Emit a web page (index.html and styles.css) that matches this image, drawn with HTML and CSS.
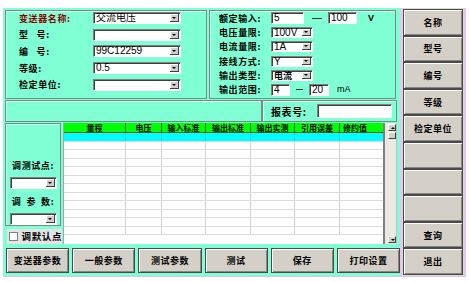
FILE: index.html
```html
<!DOCTYPE html>
<html lang="zh-CN">
<head>
    <meta charset="UTF-8">
    <title>变送器检定</title>
    <link rel="stylesheet" href="styles.css">
</head>
<body>
<div class="screen">
    <div class="main">
        <div class="top">
            <div class="group meter">
                <div class="row"><span class="lbl red">变送器名称:</span><div class="combo w88"><span class="val">交流电压</span><i class="drop"></i></div></div>
                <div class="row"><span class="lbl">型&nbsp;&nbsp;&nbsp;号:</span><div class="combo w88"><span class="val"></span><i class="drop"></i></div></div>
                <div class="row"><span class="lbl">编&nbsp;&nbsp;&nbsp;号:</span><div class="combo w88"><span class="val">99C12259</span><i class="drop"></i></div></div>
                <div class="row"><span class="lbl">等级:</span><div class="combo w88"><span class="val">0.5</span><i class="drop"></i></div></div>
                <div class="row"><span class="lbl">检定单位:</span><div class="combo w88"><span class="val"></span><i class="drop"></i></div></div>
            </div>
            <div class="group rated">
                <div class="row"><span class="lbl">额定输入:</span><span class="input w33">5</span><span class="dash"></span><span class="input w29">100</span><span class="unit">V</span></div>
                <div class="row"><span class="lbl">电压量限:</span><div class="combo w42"><span class="val">100V</span><i class="drop"></i></div></div>
                <div class="row"><span class="lbl">电流量限:</span><div class="combo w42"><span class="val">1A</span><i class="drop"></i></div></div>
                <div class="row"><span class="lbl">接线方式:</span><div class="combo w42"><span class="val">Y</span><i class="drop"></i></div></div>
                <div class="row"><span class="lbl">输出类型:</span><div class="combo w42"><span class="val cjk">电流</span><i class="drop"></i></div></div>
                <div class="row"><span class="lbl">输出范围:</span><span class="input w19">4</span><span class="dash short"></span><span class="input w20">20</span><span class="unit ma">mA</span></div>
            </div>
        </div>

        <div class="mid">
            <div class="group blank"></div>
            <div class="group report"><span class="lbl">报表号:</span><span class="input report-input"></span></div>
        </div>

        <div class="lower">
            <div class="side">
                <div class="group adjust">
                    <span class="lbl">调测试点:</span>
                    <div class="combo w47"><span class="val"></span><i class="drop"></i></div>
                    <span class="lbl spread">调<b>参</b>数:</span>
                    <div class="combo w47"><span class="val"></span><i class="drop"></i></div>
                </div>
                <div class="check"><span class="box"></span><span class="lbl">调默认点</span></div>
            </div>
            <div class="grid">
                <div class="grid-cells">
                    <table>
                        <tr class="head"><td>量程</td><td>电压</td><td>输入标准</td><td>输出标准</td><td>输出实测</td><td>引用误差</td><td class="last">修约值</td></tr>
                        <tr class="current"><td></td><td></td><td></td><td></td><td></td><td></td><td></td></tr>
                        <tr><td></td><td></td><td></td><td></td><td></td><td></td><td></td></tr>
                        <tr><td></td><td></td><td></td><td></td><td></td><td></td><td></td></tr>
                        <tr><td></td><td></td><td></td><td></td><td></td><td></td><td></td></tr>
                        <tr><td></td><td></td><td></td><td></td><td></td><td></td><td></td></tr>
                        <tr><td></td><td></td><td></td><td></td><td></td><td></td><td></td></tr>
                        <tr><td></td><td></td><td></td><td></td><td></td><td></td><td></td></tr>
                        <tr><td></td><td></td><td></td><td></td><td></td><td></td><td></td></tr>
                        <tr><td></td><td></td><td></td><td></td><td></td><td></td><td></td></tr>
                        <tr><td></td><td></td><td></td><td></td><td></td><td></td><td></td></tr>
                        <tr><td></td><td></td><td></td><td></td><td></td><td></td><td></td></tr>
                        <tr><td></td><td></td><td></td><td></td><td></td><td></td><td></td></tr>
                    </table>
                </div>
                <div class="scrollbar">
                    <span class="arrow up"></span>
                    <span class="thumb"></span>
                    <span class="track"></span>
                    <span class="arrow down"></span>
                </div>
            </div>
        </div>

        <div class="actions">
            <button class="btn">变送器参数</button>
            <button class="btn">一般参数</button>
            <button class="btn">测试参数</button>
            <button class="btn">测试</button>
            <button class="btn">保存</button>
            <button class="btn">打印设置</button>
        </div>
    </div>

    <div class="menu">
        <button class="btn">名称</button>
        <button class="btn">型号</button>
        <button class="btn">编号</button>
        <button class="btn">等级</button>
        <button class="btn">检定单位</button>
        <button class="btn"></button>
        <button class="btn"></button>
        <button class="btn"></button>
        <button class="btn">查询</button>
        <button class="btn">退出</button>
    </div>
</div>
</body>
</html>
```

FILE: styles.css
```css
body {
    margin: 0;
    background: #fff;
    font-family: "Noto Sans CJK SC", sans-serif;
    font-size: 9px;
    line-height: 11px;
    color: #000;
}

.screen {
    display: flex;
    margin: 8px 0 0 3px;
    width: 463px;
    height: 268px;
    border-bottom: 1px solid #d8c4ec;
}

/* aqua work area */
.main {
    width: 397px;
    background: #80ffd4;
    padding: 2px 0 0 2px;
    box-sizing: border-box;
}

.group {
    box-sizing: border-box;
    border: 1px solid #7c8a86;
    box-shadow: inset 1px 1px 0 #c8fff0;
}

.lbl {
    font-weight: 700;
    letter-spacing: 0.6px;
    white-space: nowrap;
    line-height: 11px;
}

.red { color: #8b0000; }

.top {
    display: flex;
    gap: 2px;
    height: 89px;
}

.row {
    display: flex;
    align-items: center;
    flex-shrink: 0;
}

.meter {
    width: 202px;
    padding: 1px 0 0 13px;
    display: flex;
    flex-direction: column;
    gap: 4.7px;
}

.meter .row { height: 12px; }
.meter .lbl { width: 74px; }

.rated {
    width: 187px;
    padding: 1.5px 0 0 9px;
    display: flex;
    flex-direction: column;
    gap: 3.4px;
}

.rated .row { height: 11px; }
.rated .lbl { width: 52px; }

/* combo box */
.combo {
    display: flex;
    flex-shrink: 0;
    height: 12px;
    box-sizing: border-box;
    background: #fff;
    border: 1px solid;
    border-color: #808080 #fff #fff #808080;
    box-shadow: inset 1px 1px 0 #404040;
}

.val {
    flex: 1;
    padding-left: 2px;
    font-family: "Liberation Sans", "Noto Sans CJK SC", sans-serif;
    font-size: 10px;
    line-height: 10px;
    overflow: hidden;
}

.val.cjk { font-size: 9px; font-weight: 700; }

.drop {
    width: 8px;
    margin: 1px 1px 1px 0;
    background: #d4d0c8;
    border-right: 1px solid #404040;
    border-bottom: 1px solid #404040;
    box-shadow: inset 1px 1px 0 #fff;
    position: relative;
}

.drop::after {
    content: "";
    position: absolute;
    left: 2px;
    top: 3px;
    border-left: 2px solid transparent;
    border-right: 2px solid transparent;
    border-top: 2px solid #000;
}

.w88 { width: 88px; }
.w42 { width: 42px; height: 11px; }
.w42 .drop::after { top: 2px; }
.w47 { width: 47px; }

.input {
    display: block;
    height: 12px;
    box-sizing: border-box;
    background: #fff;
    border: 1px solid;
    border-color: #808080 #fff #fff #808080;
    box-shadow: inset 1px 1px 0 #404040;
    padding-left: 2px;
    font-family: "Liberation Sans", sans-serif;
    font-size: 10px;
    line-height: 10px;
}

.w33 { width: 33px; }
.w29 { width: 29px; }
.w19 { width: 19px; }
.w20 { width: 20px; }

.dash {
    width: 10px;
    height: 0;
    margin: 0 6px 0 8px;
    border-top: 1px solid #333;
}

.dash.short { width: 7px; margin: 0 6px 0 6px; }

.unit {
    margin-left: 11px;
    font-family: "Liberation Sans", sans-serif;
    font-size: 9px;
    font-weight: 700;
}

.unit.ma { margin-left: 8px; font-weight: 400; }

/* report row */
.mid {
    display: flex;
    height: 22px;
    margin-top: 1px;
}

.blank { width: 257px; }

.report {
    width: 135px;
    display: flex;
    align-items: center;
    padding-left: 8px;
}

.report .lbl { width: 46px; font-size: 10px; }

.report-input {
    width: 75px;
    height: 14px;
}

/* test points */
.lower {
    display: flex;
    gap: 2px;
    margin-top: 1px;
    height: 121px;
}

.side {
    width: 56px;
    display: flex;
    flex-direction: column;
}

.adjust {
    height: 103px;
    display: flex;
    flex-direction: column;
    align-items: center;
    padding-top: 36px;
}

.adjust .combo { margin: 6px 0 7px; }

.spread b {
    font-weight: 700;
    margin: 0 5px;
}

.check {
    display: flex;
    align-items: center;
    gap: 4px;
    margin: 3px 0 0 2px;
    height: 15px;
    width: 55px;
    background: #e4e4e4;
    padding-left: 2px;
    box-sizing: border-box;
}

.check .lbl { font-size: 9.5px; }

.box {
    width: 7px;
    height: 7px;
    background: #fff;
    border: 1px solid #808080;
}

/* grid */
.grid {
    display: flex;
    width: 334px;
    height: 121px;
    background: #fff;
    box-sizing: border-box;
    border-left: 1px solid #9aa;
}

.grid-cells {
    width: 320px;
    overflow: hidden;
    border-right: 2px solid #808080;
}

table {
    border-collapse: collapse;
    table-layout: fixed;
    width: 320px;
}

td {
    height: 7.5px;
    padding: 0;
    border-right: 1px solid #d0d0d0;
    border-bottom: 1px solid #dcdcdc;
    line-height: 7px;
}

td:nth-child(1) { width: 61px; }
td:nth-child(2) { width: 35px; }
td:nth-child(3) { width: 43px; }
td:nth-child(4) { width: 44px; }
td:nth-child(5) { width: 43px; }
td:nth-child(6) { width: 44px; }

.head td {
    height: 9px;
    background: #00ff00;
    border-right: 1px solid #1a5a1a;
    border-bottom: 1px solid #1a5a1a;
    text-align: center;
    font-size: 8px;
    font-weight: 700;
    line-height: 9px;
    white-space: nowrap;
}

.head td.last { text-align: left; padding-left: 3px; }

.current td { background: #00ffff; border-right-color: #00e0e0; }

.scrollbar {
    width: 12px;
    display: flex;
    flex-direction: column;
    background: #ece9e5;
    padding: 1px 0 1px 3px;
    box-sizing: border-box;
    border-right: 1px solid #c0c0c0;
}

.arrow, .thumb {
    display: block;
    height: 7px;
    background: #d4d0c8;
    border: 1px solid;
    border-color: #fff #404040 #404040 #fff;
    box-sizing: border-box;
    position: relative;
}

.thumb { margin-top: 1px; }

.track { flex: 1; }

.arrow::after {
    content: "";
    position: absolute;
    left: 2px;
    top: 2px;
    border-left: 2px solid transparent;
    border-right: 2px solid transparent;
}

.up::after { border-bottom: 2px solid #000; }
.down::after { border-top: 2px solid #000; }

/* buttons */
.btn {
    background: #d4d0c8;
    border: 1px solid #4a4a4a;
    box-shadow: inset 1px 1px 0 #fff, inset -1px -1px 0 #8a8680;
    font-family: "Noto Sans CJK SC", sans-serif;
    font-size: 9px;
    font-weight: 700;
    color: #000;
    padding: 0;
    letter-spacing: 0.5px;
}

.actions {
    display: grid;
    grid-template-columns: repeat(6, 1fr);
    gap: 3px;
    height: 25px;
    margin: 4px 0 0 1px;
    width: 394px;
}

.menu {
    width: 66px;
    background: #dcd8d4;
    border-left: 2px solid #e2c8ee;
    border-right: 2px solid #e2c8ee;
    box-sizing: border-box;
    padding: 1px;
    display: grid;
    grid-template-rows: repeat(10, 1fr);
}
```
